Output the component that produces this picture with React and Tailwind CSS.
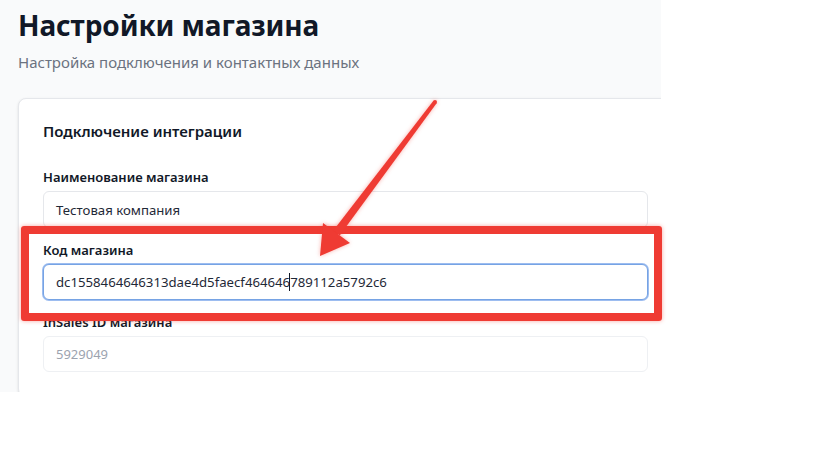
export default function App() {
  const font = "font-['Noto_Sans','Open_Sans',sans-serif]";
  return (
    <div className={`relative w-[822px] h-[455px] bg-white ${font}`}>
      <div className="w-[661px] h-[392px] overflow-hidden bg-[#f9fafb] pl-[18px] pt-2">
        <h1 className="text-[28px] leading-[34px] font-bold text-[#111827] tracking-[-0.1px]">
          Настройки магазина
        </h1>
        <p className="mt-[10px] text-[15px] leading-5 text-[#6b7280]">
          Настройка подключения и контактных данных
        </p>
        <div className="mt-[26px] w-[655px] rounded-lg border border-[#e5e7eb] bg-white px-6 pt-[22px] pb-6 shadow-sm">
          <h2 className="text-[15px] leading-5 font-semibold text-[#111827]">
            Подключение интеграции
          </h2>
          <div className="mt-[27px] flex flex-col gap-[13px]">
            <div className="flex flex-col gap-[5px]">
              <label className="text-[13px] leading-[18px] font-semibold text-[#111827]">
                Наименование магазина
              </label>
              <div className="h-[37px] rounded-md border border-[#e5e7eb] bg-white px-3 flex items-center text-[13.2px] leading-5 text-[#1f2937]">
                Тестовая компания
              </div>
            </div>
            <div className="flex flex-col gap-[5px]">
              <label className="text-[13px] leading-[18px] font-semibold text-[#111827]">
                Код магазина
              </label>
              <div className="h-[36px] rounded-md border border-[#76a3e4] shadow-[0_0_0_1px_#9dbdf0] bg-white px-3 flex items-center text-[13.2px] leading-5 text-[#1f2937]">
                <span>dc1558464646313dae4d5faecf464646</span>
                <span className="inline-block w-px h-[18px] bg-[#111827] -ml-[1px]"></span>
                <span>789112a5792c6</span>
              </div>
            </div>
            <div className="flex flex-col gap-[5px]">
              <label className="text-[13px] leading-[18px] font-semibold text-[#111827]">
                InSales ID магазина
              </label>
              <div className="h-[36px] rounded-md border border-[#eef0f3] bg-white px-3 flex items-center text-[13px] leading-5 text-[#9ca3af]">
                5929049
              </div>
            </div>
          </div>
        </div>
      </div>

      <div className="absolute left-[21px] top-[226px] w-[641px] h-[95px] rounded-[3px] border-[8px] border-[#ef3b33] shadow-[0_0_4px_rgba(239,59,51,0.45)]"></div>

      <svg className="absolute left-0 top-0" width="822" height="455" viewBox="0 0 822 455">
        <g fill="#ef3b33" style={{ filter: "drop-shadow(0 0 2px rgba(239,59,51,0.4))" }}>
          <polygon points="436.6,103.2 433.4,100.8 333.3,230.6 339.7,235.4" />
          <circle cx="435" cy="102" r="2" />
          <polygon points="323,223 350,243 320,256" />
        </g>
      </svg>
    </div>
  );
}
